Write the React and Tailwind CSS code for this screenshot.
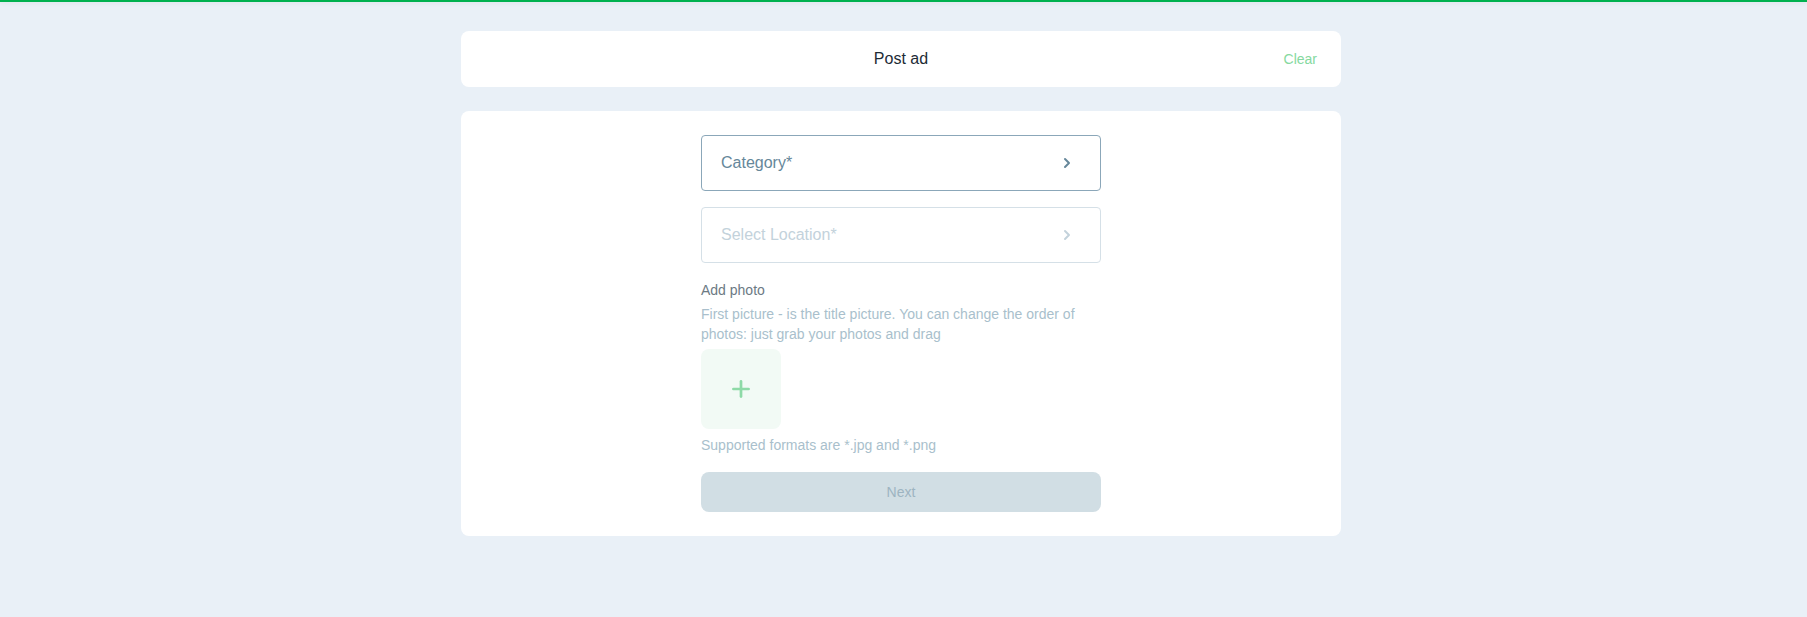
import React from 'react';
import { ChevronRight, Plus } from 'lucide-react';

const SelectField = ({ label, active }) => (
    <button
        className={`w-full h-[56px] flex items-center justify-between pl-[19px] pr-5 rounded border bg-white text-left ${active ? 'border-[#8ba7b9] text-[#66879a]' : 'border-[#d5e0e7] text-[#c3d2db]'}`}
    >
        <span className="text-base">{label}</span>
        <ChevronRight className="w-4 h-4 mr-[5px]" strokeWidth={3} />
    </button>
);

const App = () => {
    return (
        <div className="min-h-[617px] bg-[#e9f0f7] font-['Liberation_Sans',Arial,sans-serif] pr-[5px]">
            <div className="h-[2px] bg-[#00b14f] shadow-[0_1px_4px_rgba(0,0,0,0.08)] -mr-[5px]" />

            <div className="w-[880px] mx-auto pt-[29px] space-y-6">
                {/* header */}
                <header className="h-[56px] bg-white rounded-lg relative flex items-center justify-center">
                    <h1 className="text-base text-[#1d2b36]">Post ad</h1>
                    <button className="absolute right-6 top-1/2 -translate-y-1/2 text-sm text-[#86d9a0]">Clear</button>
                </header>

                {/* form */}
                <div className="bg-white rounded-lg py-6">
                    <div className="w-[400px] mx-auto">
                        <div className="space-y-4">
                            <SelectField label="Category*" active />
                            <SelectField label="Select Location*" />
                        </div>

                        <p className="mt-[17px] text-sm text-[#6c7a84]">Add photo</p>
                        <p className="mt-[4px] text-sm leading-5 text-[#a9bfcc]">
                            First picture - is the title picture. You can change the order of photos: just grab your photos and drag
                        </p>

                        <button className="mt-[5px] w-20 h-20 rounded-lg bg-[#f2faf5] flex items-center justify-center">
                            <Plus className="w-[26px] h-[26px] text-[#8edaa7]" strokeWidth={2.5} />
                        </button>

                        <p className="mt-[6px] text-sm text-[#a9bfcc]">Supported formats are *.jpg and *.png</p>

                        <button className="mt-[17px] w-full h-10 rounded-lg bg-[#d1dee4] text-sm text-[#9db4c1]">Next</button>
                    </div>
                </div>
            </div>
        </div>
    );
};

export default App;
